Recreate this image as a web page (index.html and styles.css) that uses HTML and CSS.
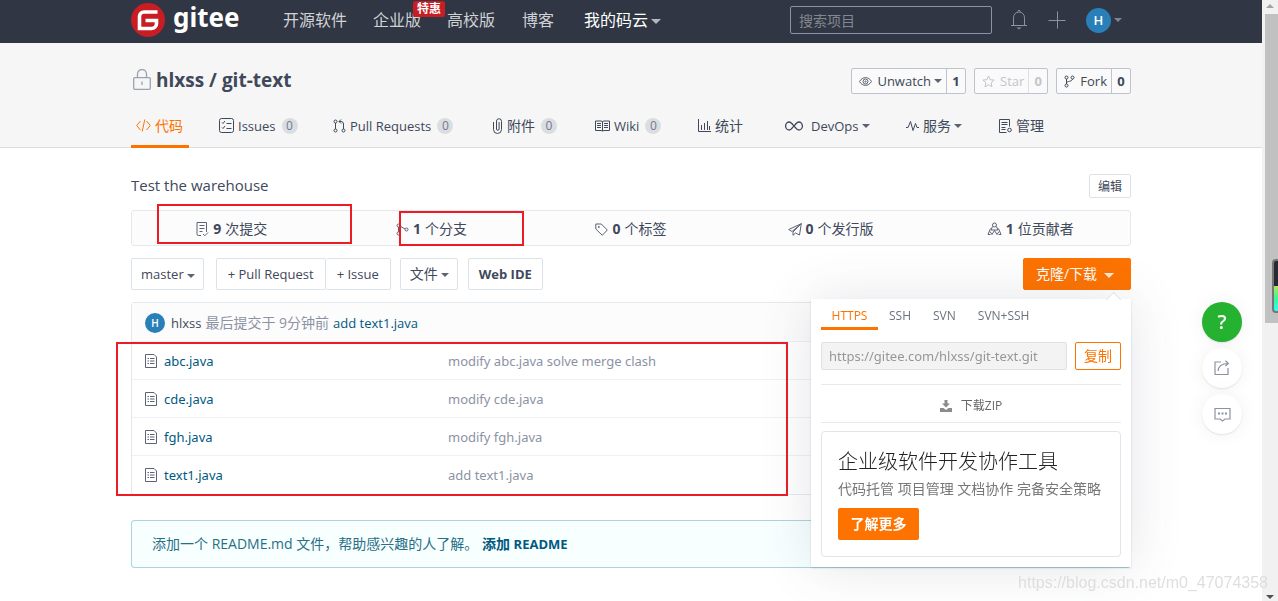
FILE: index.html
```html
<!DOCTYPE html>
<html lang="zh-CN">
<head>
<meta charset="utf-8">
<title>hlxss / git-text</title>
<link rel="stylesheet" href="styles.css">
</head>
<body>
<div class="page">
  <header class="topbar">
    <div class="container topbar-inner">
      <a class="logo" href="#">
        <svg width="34" height="34" viewBox="0 0 34 34"><circle cx="17" cy="17" r="17" fill="#c71d23"/><path d="M26.500 9H13a4.500 4.500 0 0 0-4.500 4.500V25.500H20.500a5 5 0 0 0 5-5V17.500H14.500" fill="none" stroke="#fff" stroke-width="3.600"/></svg>
        <span>gitee</span>
      </a>
      <nav class="topnav">
        <a href="#">开源软件</a>
        <a href="#" class="promo">企业版<span class="promo-tag">特惠</span></a>
        <a href="#">高校版</a>
        <a href="#" class="blog">博客</a>
        <a href="#" class="mine">我的码云<i class="caret"></i></a>
      </nav>
      <input class="search" type="text" placeholder="搜索项目" aria-label="搜索项目">
      <div class="tools">
        <button class="icon-btn" aria-label="通知"><svg width="18" height="22" viewBox="0 0 18 22" fill="none" stroke="#8c92a4"><path d="M1 16.500H17M3.500 16V8.500a5.500 5.500 0 0 1 11 0V16M7.500 2.500L9 1l1.500 1.500"/><path d="M6.500 18.500h5L9 20.500z" fill="#8c92a4" stroke="none"/></svg></button>
        <button class="icon-btn" aria-label="新建"><svg width="18" height="18" viewBox="0 0 18 18" stroke="#8c92a4"><path d="M0.500 9.500H17.500M9.500 0.500V17.500"/></svg></button>
        <button class="icon-btn user"><span class="avatar avatar-lg">H</span><i class="caret"></i></button>
      </div>
    </div>
  </header>

  <section class="repo-head">
    <div class="container">
      <div class="title-row">
        <h1 class="repo-title"><svg width="18" height="22" viewBox="0 0 18 22" fill="none" stroke="#9ba3ae" stroke-width="1.300"><rect x="0.700" y="8.700" width="16.600" height="11.600" rx="1"/><path d="M4.500 8.500V5a4.500 4.500 0 0 1 9 0v3.500M9 12.500v3.500"/></svg>hlxss / git-text</h1>
        <div class="social">
          <div class="counter"><button><svg width="13" height="11" viewBox="0 0 13 11" fill="none" stroke="#5d6274"><path d="M0.500 5.500C3.500 0.300 9.500 0.300 12.500 5.500C9.500 10.700 3.500 10.700 0.500 5.500z"/><circle cx="6.500" cy="5.500" r="2.500"/><circle cx="6.500" cy="5.500" r=".6"/></svg>Unwatch<i class="caret"></i></button><a href="#">1</a></div>
          <div class="counter off"><button disabled><svg width="13" height="13" viewBox="0 0 13 13" fill="none" stroke="#c4c4c8"><path d="M6.500 1l1.600 3.700 4 .4-3 2.700.9 4-3.500-2.100L3 11.800l.9-4-3-2.700 4-.4z"/></svg>Star</button><a href="#">0</a></div>
          <div class="counter"><button><svg width="11" height="13" viewBox="0 0 11 13" fill="none" stroke="#40485b"><circle cx="2.500" cy="2.500" r="1.500"/><circle cx="8.500" cy="2.500" r="1.500"/><circle cx="2.500" cy="10.500" r="1.500"/><path d="M2.500 4v5M8.500 4c0 3-6 1.500-6 4.500"/></svg>Fork</button><a href="#">0</a></div>
        </div>
      </div>
      <nav class="tabs">
        <a href="#" class="active"><svg width="15" height="14" viewBox="0 0 15 14" fill="none" stroke="#fe7300"><path d="M4.500 2L0.700 6.500l3.800 4.500M10.500 2l3.800 4.500-3.800 4.500M8.800 0.500L6.200 12.500"/></svg>代码</a>
        <a href="#" class="latin"><svg width="15" height="15" viewBox="0 0 15 15" fill="none" stroke="#40485b"><rect x=".5" y=".5" width="14" height="14" rx="2"/><path d="M3 4.500l1 1 2-2.500M3 9.500l1 1 2-2.500M7.500 5.500h5M7.500 10.500h5"/></svg>Issues<span class="badge">0</span></a>
        <a href="#" class="latin"><svg width="13" height="14" viewBox="0 0 13 14" fill="none" stroke="#40485b"><circle cx="2.500" cy="2.500" r="1.500"/><circle cx="2.500" cy="11.500" r="1.500"/><circle cx="10.500" cy="11.500" r="1.500"/><path d="M2.500 4v6M10.500 10V5q0-2.500-2.500-2.500H6M8 .5L6 2.500l2 2"/></svg>Pull Requests<span class="badge">0</span></a>
        <a href="#"><svg width="11" height="16" viewBox="0 0 11 16" fill="none" stroke="#40485b"><path d="M1.500 4v7.500a4 4 0 0 0 8 0v-8a2.500 2.500 0 0 0-5-.500v8a1.300 1.300 0 0 0 2.600 0V4"/></svg>附件<span class="badge">0</span></a>
        <a href="#" class="latin"><svg width="15" height="12" viewBox="0 0 15 12" fill="none" stroke="#40485b"><path d="M.5 1h5.500l1.500.5L9 1h5.500v9.500H9l-1.500.5-1.500-.5H.5zM7.500 1.500V11M2 3.500h4M2 5.500h4M2 7.500h4M9 3.500h4M9 5.500h4M9 7.500h4"/></svg>Wiki<span class="badge">0</span></a>
        <a href="#"><svg width="13" height="13" viewBox="0 0 13 13" fill="none" stroke="#40485b"><path d="M.5 0v12.500H13M3.500 6v5M6.500 4v7M9.500 2v9M11.500 7v4"/></svg>统计</a>
        <a href="#" class="latin"><svg class="wide" width="18" height="10" viewBox="0 0 18 10" fill="none" stroke="#40485b" stroke-width="1.300"><path d="M9 5C7 2.500 6 1 4.300 1a3.700 4 0 0 0 0 8C6 9 7 7.500 9 5s3-4 4.700-4a3.700 4 0 0 1 0 8C12 9 11 7.500 9 5z"/></svg>DevOps<i class="caret"></i></a>
        <a href="#"><svg width="13" height="12" viewBox="0 0 13 12" fill="none" stroke="#40485b"><path d="M0 7.500h2L4.500 1.500l2.500 9 2.500-7 1.500 4h2"/></svg>服务<i class="caret"></i></a>
        <a href="#"><svg width="13" height="14" viewBox="0 0 13 14" fill="none" stroke="#40485b"><path d="M7.500 13.500H.5V.5h10v7M2.500 3.500h6M2.500 5.500h6M2.500 8.500h4M2.500 10.500h4"/><circle cx="10.500" cy="11" r="1.800"/></svg>管理</a>
      </nav>
    </div>
  </section>

  <main class="container main">
    <div class="desc-row"><p>Test the warehouse</p><button class="btn small">编辑</button></div>

    <div class="stats">
      <a href="#"><svg width="13" height="15" viewBox="0 0 13 15" fill="none" stroke="#5d6274"><path d="M5 13.500H2.500q-2 0-1.500-2V.5h9.500V10M3.500 3.500H8.500M3.500 6.500H8.500M3.500 9.500H6.500M7 12l1.800 1.800L12 10.500"/></svg><b>9</b> 次提交</a>
      <a href="#"><svg width="13" height="13" viewBox="0 0 13 13" fill="none" stroke="#5d6274"><circle cx="2.500" cy="2.500" r="1.500"/><circle cx="2.500" cy="10.500" r="1.500"/><circle cx="10.500" cy="6.500" r="1.500"/><path d="M2.500 4v5M4 3l5 3"/></svg><b>1</b> 个分支</a>
      <a href="#"><svg width="13" height="13" viewBox="0 0 13 13" fill="none" stroke="#5d6274"><path d="M.8 1h5.500l6 6-5 5.300L.8 6z"/><circle cx="3.800" cy="4" r=".6"/></svg><b>0</b> 个标签</a>
      <a href="#"><svg width="14" height="13" viewBox="0 0 14 13" fill="none" stroke="#5d6274"><path d="M13.300.7L.7 6.500l3.300 2L13.300.7 5 9v3.300l2.500-2.300 4 2z"/></svg><b>0</b> 个发行版</a>
      <a href="#"><svg width="15" height="14" viewBox="0 0 15 14" fill="none" stroke="#5d6274"><circle cx="7.500" cy="3" r="2"/><path d="M5.500 4.500L4 8h7L9.500 4.500M3.500 6.500L1 12.500h2.500M11.500 6.500l2.500 6h-2.500M5 12.500l2.500-4 2.500 4M3 9.500l2 3M12 9.500l-2 3"/></svg><b>1</b> 位贡献者</a>
    </div>

    <div class="toolbar">
      <button class="btn latin">master<i class="caret"></i></button>
      <div class="group"><button class="btn latin">+ Pull Request</button><button class="btn latin">+ Issue</button></div>
      <button class="btn">文件<i class="caret"></i></button>
      <button class="btn strong latin">Web IDE</button>
      <div class="clone">
        <button class="btn primary">克隆/下载<i class="caret"></i></button>
        <div class="clone-panel">
          <div class="protocols"><button class="active">HTTPS</button><button>SSH</button><button>SVN</button><button>SVN+SSH</button></div>
          <div class="url-row"><input type="text" value="https://gitee.com/hlxss/git-text.git" readonly aria-label="仓库地址"><button class="copy">复制</button></div>
          <a class="zip" href="#"><svg width="12" height="12" viewBox="0 0 12 12" fill="#8b8b8b"><path d="M4.500 0h3v3.500H10L6 7.500 2 3.500h2.500zM0 8h3.500L6 10l2.500-2H12v4H0z"/></svg>下载ZIP</a>
          <div class="ad"><h2>企业级软件开发协作工具</h2><p>代码托管 项目管理 文档协作 完备安全策略</p><button class="more">了解更多</button></div>
        </div>
      </div>
    </div>

    <div class="files">
      <div class="commit"><span class="avatar">H</span><span class="author latin">hlxss</span> 最后提交于 9分钟前 <a class="latin" href="#">add text1.java</a></div>
      <table>
        <tr><td><svg width="12" height="14" viewBox="0 0 12 14"><use href="#file"/></svg><a href="#">abc.java</a></td><td>modify abc.java solve merge clash</td></tr>
        <tr><td><svg width="12" height="14" viewBox="0 0 12 14"><use href="#file"/></svg><a href="#">cde.java</a></td><td>modify cde.java</td></tr>
        <tr><td><svg width="12" height="14" viewBox="0 0 12 14"><use href="#file"/></svg><a href="#">fgh.java</a></td><td>modify fgh.java</td></tr>
        <tr><td><svg width="12" height="14" viewBox="0 0 12 14"><use href="#file"/></svg><a href="#">text1.java</a></td><td>add text1.java</td></tr>
      </table>
    </div>

    <div class="readme">添加一个 README.md 文件，帮助感兴趣的人了解。 <a href="#">添加 <span class="latin">README</span></a></div>

    <div class="mark mark-commits"></div>
    <div class="mark mark-branches"></div>
    <div class="mark mark-files"></div>
  </main>

  <div class="floats">
    <button class="help" aria-label="帮助">?</button>
    <button aria-label="分享"><svg width="16" height="16" viewBox="0 0 16 16" fill="none" stroke="#8c92a4" stroke-width="1.200"><path d="M7 2H1v12.500h13V8M4 11C4.500 6 8 3.500 14 3.500M11.500.8L14.300 3.500 11.500 6"/></svg></button>
    <button aria-label="反馈"><svg width="17" height="15" viewBox="0 0 17 15" fill="none" stroke="#8c92a4" stroke-width="1.200"><path d="M1 1.500h15v10.500h-5L8.500 14 6 12H1z"/><path d="M4 6.500h2M7.500 6.500h2M11 6.500h2" stroke-width="1.800"/></svg></button>
  </div>
  <div class="watermark">https://blog.csdn.net/m0_47074358</div>
</div>
<div class="scrollbar"><i class="up"></i><div class="thumb"></div><i class="down"></i><div class="gauge"></div></div>
<svg class="defs" width="0" height="0"><defs><g id="file" fill="none" stroke="#5d6274"><path d="M.5.5h8.500l2.500 2.500v10.500H.5z"/><path d="M2.500 4.500h1.500M5 4.500h4.500M2.500 7h1.500M5 7h4.500M2.500 9.500h1.500M5 9.500h4.500"/></g></defs></svg>
</body>
</html>
```

FILE: styles.css
```css
* { box-sizing: border-box; }
body {
  margin: 0;
  display: flex;
  min-height: 100vh;
  overflow: hidden;
  font: 14px/20px "Open Sans", "Noto Sans CJK SC", sans-serif;
  color: #40485b;
  background: #fff;
}
h1, h2, p { margin: 0; font-weight: 400; }
a { color: inherit; text-decoration: none; }
button { font: inherit; color: inherit; background: none; border: 0; padding: 0; white-space: nowrap; }
input { font: inherit; min-width: 0; }
svg { flex: none; }
.defs { position: absolute; }
.page { flex: 1; min-width: 0; }
.container { width: 100%; max-width: 1000px; margin: 0 auto; }
.latin { font-size: 13px; }

.caret {
  display: inline-block;
  border: 4px solid transparent;
  border-top-color: currentColor;
  border-bottom: 0;
  margin-left: 3px;
  vertical-align: middle;
  opacity: .85;
}
.avatar {
  display: inline-flex;
  align-items: center;
  justify-content: center;
  width: 20px;
  height: 20px;
  border-radius: 50%;
  background: #2980b9;
  color: #fff;
  font-size: 10px;
  font-weight: 600;
}
.avatar-lg { width: 25px; height: 25px; font-size: 13px; }

.topbar { background: #303643; height: 43px; }
.topbar-inner { display: flex; align-items: center; height: 40px; }
.logo { display: flex; align-items: center; gap: 8px; width: 152px; color: #fff; font: 700 26px/34px "Noto Sans", sans-serif; }
.logo span { padding-bottom: 6px; }
.topnav { display: flex; gap: 26px; font-size: 16px; color: #d0d2d6; white-space: nowrap; }
.topnav .blog { margin-left: 1px; }
.topnav .mine { margin-left: 4px; color: #fff; }
.topnav .caret { border-width: 5px 5px 0; opacity: .65; }
.promo { position: relative; }
.promo-tag { position: absolute; left: 40px; top: -9px; padding: 0 4px; background: #c71d23; color: #fff; border-radius: 2px; font-size: 12px; font-weight: 700; line-height: 16px; }
.search { width: 202px; height: 28px; margin-left: auto; padding: 0 8px; background: transparent; border: 1px solid #8c92a4; border-radius: 2px; color: #fff; }
.search::placeholder { color: #84878f; opacity: 1; }
.tools { display: flex; align-items: center; gap: 20px; margin: 0 9px 0 18px; }
.icon-btn { display: flex; align-items: center; color: #8c92a4; }

.repo-head { background: #f6f6f6; border-bottom: 1px solid #dcdddf; height: 105px; padding-top: 24px; }
.title-row { display: flex; align-items: center; justify-content: space-between; height: 28px; }
.repo-title { display: flex; align-items: center; gap: 5px; padding: 0 0 2px 2px; font: 700 19px/26px "Open Sans", sans-serif; }
.social { display: flex; gap: 8px; font-size: 13px; }
.counter { display: flex; height: 26px; border: 1px solid #c0c2ce; border-radius: 2px; background: #fafafa; }
.counter button { display: flex; align-items: center; padding: 0 4px 0 7px; }
.counter svg { margin-right: 5px; }
.counter a { width: 19px; border-left: 1px solid #c0c2ce; text-align: center; font-weight: 700; line-height: 24px; }
.counter.off { color: #c4c4c8; }
.off a { border-color: #e0e0e4; }
.tabs { display: grid; grid-template-columns: 83px 114px 159px 103px 103px 87px 121px 93px auto; margin-top: 10px; height: 43px; }
.tabs a { display: flex; align-items: center; justify-self: start; padding: 0 5px 2px; white-space: nowrap; }
.tabs svg { margin-right: 4px; }
.tabs svg.wide { margin-right: 8px; }
.tabs .active { color: #fe7300; border-bottom: 3px solid #fe7300; padding: 2px 5px 0; width: 58px; }
.badge { min-width: 16px; height: 16px; margin-left: 6px; border-radius: 8px; background: #dcdddf; color: #6d7a9b; font-size: 12px; line-height: 16px; text-align: center; }

.main { position: relative; padding-top: 26px; }
.desc-row { display: flex; align-items: center; justify-content: space-between; height: 24px; font-size: 15px; }
.desc-row p { padding-bottom: 2px; }
.btn { height: 32px; padding: 0 8px 0 9px; background: #fff; border: 1px solid #dce3e8; border-radius: 2px; }
.btn.small { height: 24px; padding: 2px 8px 0; font-size: 12px; line-height: 20px; }
.stats { display: grid; grid-template-columns: repeat(5, 1fr); height: 36px; margin-top: 12px; border: 1px solid #e3e9ed; border-radius: 3px; background: #fcfcfc; }
.stats a { display: flex; align-items: center; justify-content: center; gap: 4px; padding-top: 2px; }

.toolbar { display: flex; align-items: center; margin-top: 12px; }
.group { display: flex; margin: 0 9px 0 12px; }
.group .btn { padding: 0 11px; }
.group .btn + .btn { border-left: 0; }
.btn.strong { margin-left: 10px; padding: 0 10px; font-weight: 700; }
.clone { position: relative; margin-left: auto; }
.btn.primary { width: 108px; padding-right: 13px; background: #fe7300; border-color: #fe7300; color: #fff; }
.primary .caret { border-width: 5px 5px 0; margin-left: 7px; }
.clone-panel { position: absolute; z-index: 2; top: 41px; right: 0; width: 320px; padding: 0 10px 10px; background: #fff; box-shadow: 0 1px 2px rgba(34, 36, 38, .15), 0 0 50px rgba(64, 72, 91, .14); }
.clone-panel::before { content: ""; position: absolute; right: 12px; top: -5px; width: 10px; height: 10px; background: #fff; border: solid #e0e3e8; border-width: 1px 0 0 1px; transform: rotate(45deg); }
.protocols { display: flex; height: 31px; color: #6c727f; font-size: 12px; }
.protocols button { padding: 2px 11px 0; }
.protocols .active { width: 57px; color: #fe7300; border-bottom: 3px solid #fe7300; padding: 5px 0 0; }
.url-row { display: flex; gap: 8px; margin: 12px 0 14px; }
.url-row input { flex: 1; height: 28px; padding: 0 7px; border: 1px solid #dce3e8; border-radius: 2px; background: #f3f3f3; color: #979797; font-family: "Noto Sans", sans-serif; font-size: 13px; }
.copy { width: 46px; border: 1px solid #fe7300; border-radius: 2px; color: #fe7300; }
.zip { display: flex; align-items: center; justify-content: center; gap: 9px; height: 39px; padding-top: 4px; border: solid #e9e9eb; border-width: 1px 0; font-size: 12px; color: #666; }
.ad { margin-top: 8px; padding: 16px; border: 1px solid #e3e4e6; border-radius: 4px; color: #777; white-space: nowrap; }
.ad h2 { font-size: 20px; font-weight: 300; line-height: 28px; color: #222; }
.ad p { line-height: 20px; margin: 3px 0 9px; }
.more { width: 81px; height: 32px; background: #fe7300; color: #fff; border-radius: 2px; font-weight: 700; }

.files { margin-top: 12px; border: 1px solid #e3e9ed; border-radius: 3px; }
.commit { display: flex; align-items: center; gap: 4px; height: 38px; padding: 2px 13px 0; background: #fcfcfc; color: #8c92a4; }
.commit .author { color: #40485b; margin-left: 2px; }
.commit a, .files td a { color: #005980; }
table { width: 100%; border-collapse: collapse; font-size: 13px; }
td { height: 38px; padding: 0; border-top: 1px solid #eef2f5; color: #8c92a4; font-family: "Noto Sans", sans-serif; }
td:first-child { width: 316px; padding-left: 13px; }
td svg { margin-right: 7px; vertical-align: -2px; }
.readme { margin-top: 25px; height: 48px; padding: 0 21px; line-height: 48px; background: #f8ffff; color: #276f86; border-radius: 4px; box-shadow: 0 0 0 1px #a9d5de inset; }
.readme a { color: #005980; font-weight: 700; }

.mark { position: absolute; z-index: 1; border: 2px solid #ed1c24; }
.mark-commits { left: 26px; top: 56px; width: 195px; height: 40px; }
.mark-branches { left: 268px; top: 63px; width: 125px; height: 35px; }
.mark-files { left: -15px; top: 194px; width: 672px; height: 154px; }

.floats { position: fixed; right: 36px; top: 302px; display: flex; flex-direction: column; gap: 6px; }
.floats button { display: flex; align-items: center; justify-content: center; width: 40px; height: 40px; border-radius: 50%; background: #fff; box-shadow: 0 1px 2px rgba(0, 0, 0, .1), 0 0 20px rgba(0, 0, 0, .06); }
.floats .help { background: #25b230; color: #fff; font-size: 20px; font-weight: 600; }
.watermark { position: fixed; right: 10px; bottom: 8px; z-index: 3; font: 16px/20px "Liberation Sans", sans-serif; color: #dedede; }

.scrollbar { position: relative; display: flex; flex-direction: column; align-items: center; width: 16px; padding: 4px 0 2px; background: #f1f1f1; }
.scrollbar i { border: 4px solid transparent; }
.scrollbar .up { border-top: 0; border-bottom-color: #a3a3a3; }
.scrollbar .down { border-bottom: 0; border-top-color: #505050; margin-top: auto; }
.thumb { width: 13px; height: 309px; margin: 6px 0 0 2px; background: #c1c1c1; }
.gauge { position: absolute; right: -4px; top: 259px; width: 10px; height: 54px; border: 2px solid #777; border-radius: 4px; background: linear-gradient(#262a35 50%, #b5e853 50%, #3cf59a 75%, #2fffff); }
```
